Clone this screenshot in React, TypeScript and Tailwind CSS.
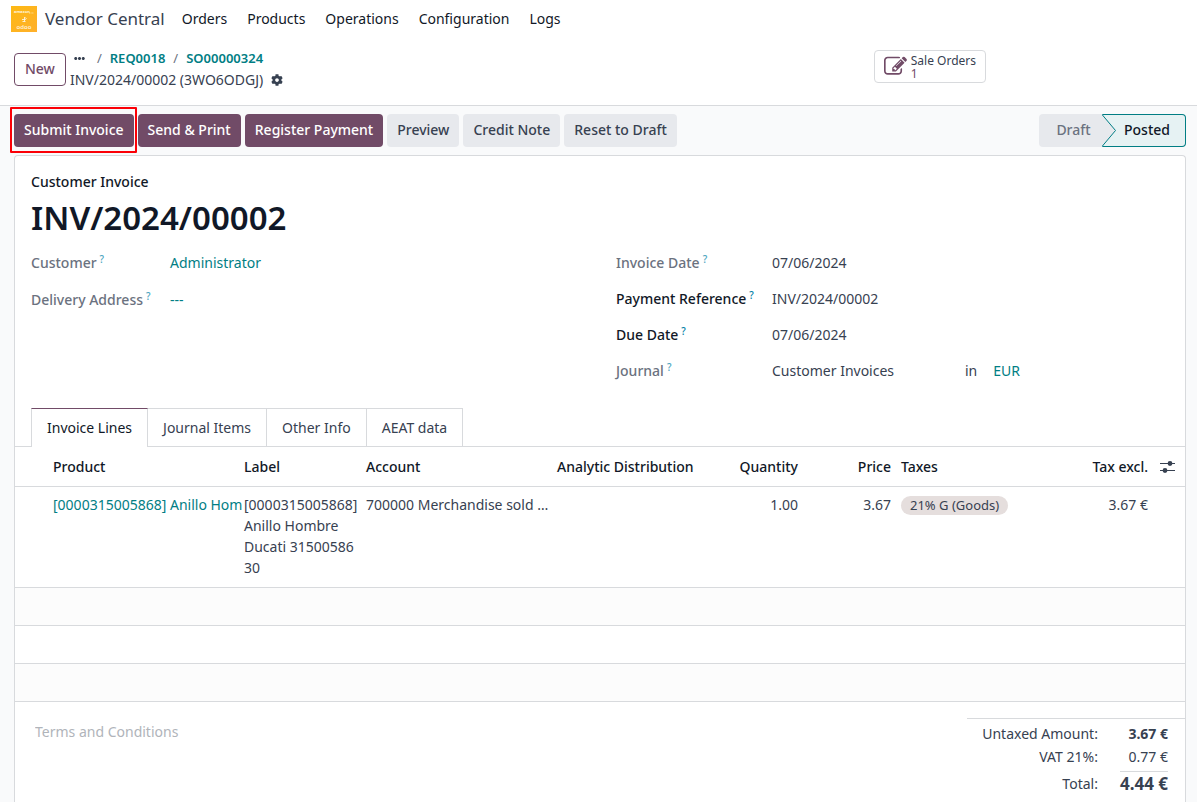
import { Fragment, useState } from "react";
import type { ReactNode } from "react";
import { FaCog, FaEllipsisH } from "react-icons/fa";

const MENU = ["Orders", "Products", "Operations", "Configuration", "Logs"];
const TABS = ["Invoice Lines", "Journal Items", "Other Info", "AEAT data"];

function Logo() {
  return (
    <svg viewBox="0 0 26 26" className="size-[26px] shrink-0" aria-hidden="true">
      <defs>
        <linearGradient id="logo-fill" x1="0" y1="0" x2="1" y2="1">
          <stop offset="0" stopColor="#fdb913" />
          <stop offset="1" stopColor="#ffb02c" />
        </linearGradient>
      </defs>
      <rect width="26" height="26" fill="url(#logo-fill)" />
      <text x="3" y="7" fontSize="4" fontWeight="700" fill="#fff5dc" fontFamily="Noto Sans, sans-serif">amazon</text>
      <path d="M18 7h5" stroke="#fff0c8" strokeWidth="0.7" strokeDasharray="1 0.6" />
      <path d="M13.500 11v4.500M11 13.500h3.500q1.500-1.500 0-2M11.500 15.500h3" stroke="#fff5dc" strokeWidth="0.9" fill="none" />
      <text x="13" y="22.500" fontSize="6" textAnchor="middle" fontWeight="600" fill="#fff0d2" fontFamily="Noto Sans, sans-serif">odoo</text>
    </svg>
  );
}

function EditIcon() {
  return (
    <svg viewBox="0 0 1792 1792" className="size-[23px] shrink-0" fill="#714b67" aria-hidden="true">
      <path d="M888 1184l116-116-152-152-116 116v56h96v96h56zm440-720q-16-16-33 1l-350 350q-17 17-1 33t33-1l350-350q17-17 1-33zm80 594v190q0 119-84.500 203.500t-203.500 84.500h-832q-119 0-203.500-84.500t-84.500-203.500v-832q0-119 84.500-203.500t203.500-84.500h832q63 0 117 25 15 7 18 23 3 17-9 29l-49 49q-14 14-32 8-23-6-45-6h-832q-66 0-113 47t-47 113v832q0 66 47 113t113 47h832q66 0 113-47t47-113v-126q0-13 9-22l64-64q15-15 35-7t20 29zm-96-738l288 288-672 672h-288v-288zm444 132l-92 92-288-288 92-92q28-28 68-28t68 28l152 152q28 28 28 68t-28 68z" />
    </svg>
  );
}

function ColumnsIcon() {
  return (
    <svg viewBox="0 0 15 13" className="h-[13px] w-[15px]" aria-hidden="true">
      <path d="M0 3.500h15M0 10.500h15" stroke="#374151" strokeWidth="1.200" />
      <circle cx="10" cy="3.500" r="2.400" fill="#374151" />
      <circle cx="5" cy="10.500" r="2.400" fill="#374151" />
    </svg>
  );
}

function ActionButton({ primary, children }: { primary?: boolean; children: ReactNode }) {
  return (
    <button
      type="button"
      className={
        primary
          ? "h-[33px] rounded bg-[#714b67] px-[10px] pb-[2px] font-medium whitespace-nowrap text-white"
          : "h-[33px] rounded bg-[#e7e9ed] px-[10px] pb-[2px] font-medium whitespace-nowrap text-[#374151]"
      }
    >
      {children}
    </button>
  );
}

function Field({ label, strong, children }: { label: string; strong?: boolean; children: ReactNode }) {
  return (
    <Fragment>
      <dt className={strong ? "font-medium whitespace-nowrap text-[#111827]" : "font-medium whitespace-nowrap text-[#6b7280]"}>
        {label}
        <sup className={strong ? "ml-[3px] text-[10px] text-[#0180a5]" : "ml-[3px] text-[10px] text-[#4da6c0]"}>?</sup>
      </dt>
      <dd className="text-[#374151]">{children}</dd>
    </Fragment>
  );
}

export default function App() {
  const [tab, setTab] = useState(TABS[0]);
  const link = "text-[#017e84]";
  const th = "px-[5px] font-medium whitespace-nowrap";
  const td = "px-[5px] py-[7px] align-top";

  return (
    <div className="flex h-screen flex-col overflow-hidden bg-[#f9fafb] font-['Noto_Sans',sans-serif] text-[14px] leading-[21px] text-[#374151]">
      <header className="shrink-0 border-b border-[#d8dadd] bg-white">
        <nav className="flex h-[38px] items-center pl-[11px]">
          <Logo />
          <a href="#home" className="ml-2 pb-[2px] text-[17px]">Vendor Central</a>
          <div className="ml-[17px] flex gap-5 pb-[2px] text-[#111827]">
            {MENU.map((m) => (
              <a key={m} href={`#${m.toLowerCase()}`}>{m}</a>
            ))}
          </div>
        </nav>
        <div className="flex h-[67px] pt-[10px] pl-[14px]">
          <div className="flex flex-1 gap-1">
            <button type="button" className="mt-[5px] h-[33px] rounded border border-[#714b67] px-[10px] pb-[2px] font-medium text-[#714b67]">
              New
            </button>
            <div>
              <ol className="flex items-center text-[13px] font-semibold">
                <li>
                  <button type="button" aria-label="More" className="ml-1 block">
                    <FaEllipsisH size={11} />
                  </button>
                </li>
                <li className="ml-[12px] font-normal text-[#6b7280]">/</li>
                <li className="ml-2"><a href="#req" className={link}>REQ0018</a></li>
                <li className="ml-2 font-normal text-[#6b7280]">/</li>
                <li className="ml-2"><a href="#so" className={link}>SO00000324</a></li>
              </ol>
              <div className="flex items-center gap-2">
                <span>INV/2024/00002 (3WO6ODGJ)</span>
                <button type="button" aria-label="Actions"><FaCog size={12} /></button>
              </div>
            </div>
          </div>
          <div className="mr-[211px]">
            <button type="button" className="mt-[2px] flex h-[33px] items-center gap-1 rounded border border-[#d8dadd] px-[9px] text-left">
              <EditIcon />
              <span className="flex flex-col text-[12px] leading-[13px]">
                <span>Sale Orders</span>
                <span className="text-[#714b67]">1</span>
              </span>
            </button>
          </div>
        </div>
      </header>

      <main className="flex min-h-0 flex-1 flex-col pr-[11px] pl-[14px]">
        <div className="flex shrink-0 items-center justify-between py-2">
          <div className="flex gap-1">
            <div className="relative">
              <ActionButton primary>Submit Invoice</ActionButton>
              <span className="pointer-events-none absolute -top-[7px] -right-[3px] -bottom-[6px] -left-1 z-10 rounded-[1px] border-2 border-[#fb0007]" />
            </div>
            <ActionButton primary>Send &amp; Print</ActionButton>
            <ActionButton primary>Register Payment</ActionButton>
            <ActionButton>Preview</ActionButton>
            <ActionButton>Credit Note</ActionButton>
            <ActionButton>Reset to Draft</ActionButton>
          </div>
          <div className="flex font-medium">
            <button type="button" className="h-[33px] w-[63px] rounded-l bg-[#e7e9ed] pb-[2px] pl-[6px] text-[#6b7280]">Draft</button>
            <button type="button" aria-current="step" className="flex h-[33px] w-[84px] items-center rounded-r border-y border-r border-[#017e84] bg-[#e6f2f3] text-[#111827]">
              <svg viewBox="0 0 14 33" className="-my-px h-[33px] w-[14px] shrink-0" aria-hidden="true">
                <path d="M0 0L13.500 16.500L0 33z" fill="#e7e9ed" />
                <path d="M0 0.500L13.500 16.500L0 32.500" fill="none" stroke="#017e84" />
              </svg>
              <span className="ml-2 pb-[2px]">Posted</span>
            </button>
          </div>
        </div>

        <section className="min-h-0 flex-1 rounded-t border border-b-0 border-[#d8dadd] bg-white">
          <div className="px-4 pt-[15px]">
            <p className="font-medium text-[#111827]">Customer Invoice</p>
            <h1 className="mt-1 text-[33px] leading-[44px] font-semibold text-[#111827]">INV/2024/00002</h1>
            <div className="mt-3 grid grid-cols-2 gap-x-8">
              <dl className="grid grid-cols-[123px_1fr] content-start gap-x-4 gap-y-4">
                <Field label="Customer"><a href="#customer" className={link}>Administrator</a></Field>
                <Field label="Delivery Address"><a href="#address" className={link}>---</a></Field>
              </dl>
              <dl className="grid grid-cols-[140px_1fr] content-start gap-x-4 gap-y-[15px]">
                <Field label="Invoice Date">07/06/2024</Field>
                <Field label="Payment Reference" strong>INV/2024/00002</Field>
                <Field label="Due Date" strong>07/06/2024</Field>
                <Field label="Journal">
                  <span className="flex gap-4">
                    <span className="w-[177px]">Customer Invoices</span>
                    <span>in</span>
                    <a href="#currency" className={link}>EUR</a>
                  </span>
                </Field>
              </dl>
            </div>
          </div>

          <div role="tablist" className="mt-[27px] flex border-b border-[#d8dadd] pl-4">
            {TABS.map((t) => (
              <button
                key={t}
                type="button"
                role="tab"
                aria-selected={t === tab}
                onClick={() => setTab(t)}
                className={
                  t === tab
                    ? "-mb-px h-[39px] border-x border-t border-x-[#d8dadd] border-t-[#714b67] bg-white px-[15px] pb-[2px] text-[#111827]"
                    : "-mb-px h-[39px] border-t border-r border-b border-[#d8dadd] px-[15px] pb-px"
                }
              >
                {t}
              </button>
            ))}
          </div>

          <table className="w-full table-fixed border-collapse">
            <colgroup>
              <col className="w-[33px]" />
              <col className="w-[191px]" />
              <col className="w-[122px]" />
              <col className="w-[191px]" />
              <col className="w-[157px]" />
              <col className="w-[94px]" />
              <col className="w-[93px]" />
              <col className="w-[154px]" />
              <col className="w-[103px]" />
              <col className="w-[32px]" />
            </colgroup>
            <thead>
              <tr className="h-[39px] border-b border-[#d8dadd] text-left text-[#111827]">
                <td />
                <th className={th}>Product</th>
                <th className={th}>Label</th>
                <th className={th}>Account</th>
                <th className={th}>Analytic Distribution</th>
                <th className={`${th} text-right`}>Quantity</th>
                <th className={`${th} text-right`}>Price</th>
                <th className={th}>Taxes</th>
                <th className={`${th} text-right`}>Tax excl.</th>
                <td className="pl-[7px]">
                  <button type="button" aria-label="Optional columns" className="block"><ColumnsIcon /></button>
                </td>
              </tr>
            </thead>
            <tbody>
              <tr className="h-[101px] border-b border-[#d8dadd]">
                <td />
                <td className={td}>
                  <a href="#product" className="block whitespace-nowrap text-[#017e84]">[0000315005868] Anillo Hom</a>
                </td>
                <td className={`${td} whitespace-pre`}>{"[0000315005868]\nAnillo Hombre\nDucati 31500586\n30"}</td>
                <td className={`${td} whitespace-nowrap`}>700000 Merchandise sold …</td>
                <td />
                <td className={`${td} text-right`}>1.00</td>
                <td className={`${td} text-right`}>3.67</td>
                <td className={td}>
                  <span className="inline-block rounded-full bg-[#e5dedd] px-[9px] text-[13px] leading-[19px] whitespace-nowrap">21% G (Goods)</span>
                </td>
                <td className={`${td} text-right`}>3.67 €</td>
                <td />
              </tr>
              <tr className="h-[38px] border-b border-[#d8dadd] bg-[#fcfcfc]"><td colSpan={10} /></tr>
              <tr className="h-[38px] border-b border-[#d8dadd]"><td colSpan={10} /></tr>
              <tr className="h-[38px] border-b border-[#d8dadd] bg-[#fcfcfc]"><td colSpan={10} /></tr>
            </tbody>
          </table>

          <div className="flex justify-between pt-4">
            <textarea
              aria-label="Terms and Conditions"
              placeholder="Terms and Conditions"
              rows={2}
              className="ml-5 w-[480px] resize-none pt-[3px] outline-none placeholder:text-[#b0b4ba]"
            />
            <dl className="grid w-[218px] grid-cols-[1fr_auto] gap-x-[22px] border-t border-[#d8dadd] pt-[3px] pr-[17px] text-right leading-[23px]">
              <dt>Untaxed Amount:</dt>
              <dd className="font-bold">3.67 €</dd>
              <dt>VAT 21%:</dt>
              <dd>0.77 €</dd>
              <dt className="pt-1">Total:</dt>
              <dd className="mt-[3px] border-t border-[#d8dadd] text-[17px] font-bold">4.44 €</dd>
            </dl>
          </div>
        </section>
      </main>
    </div>
  );
}
